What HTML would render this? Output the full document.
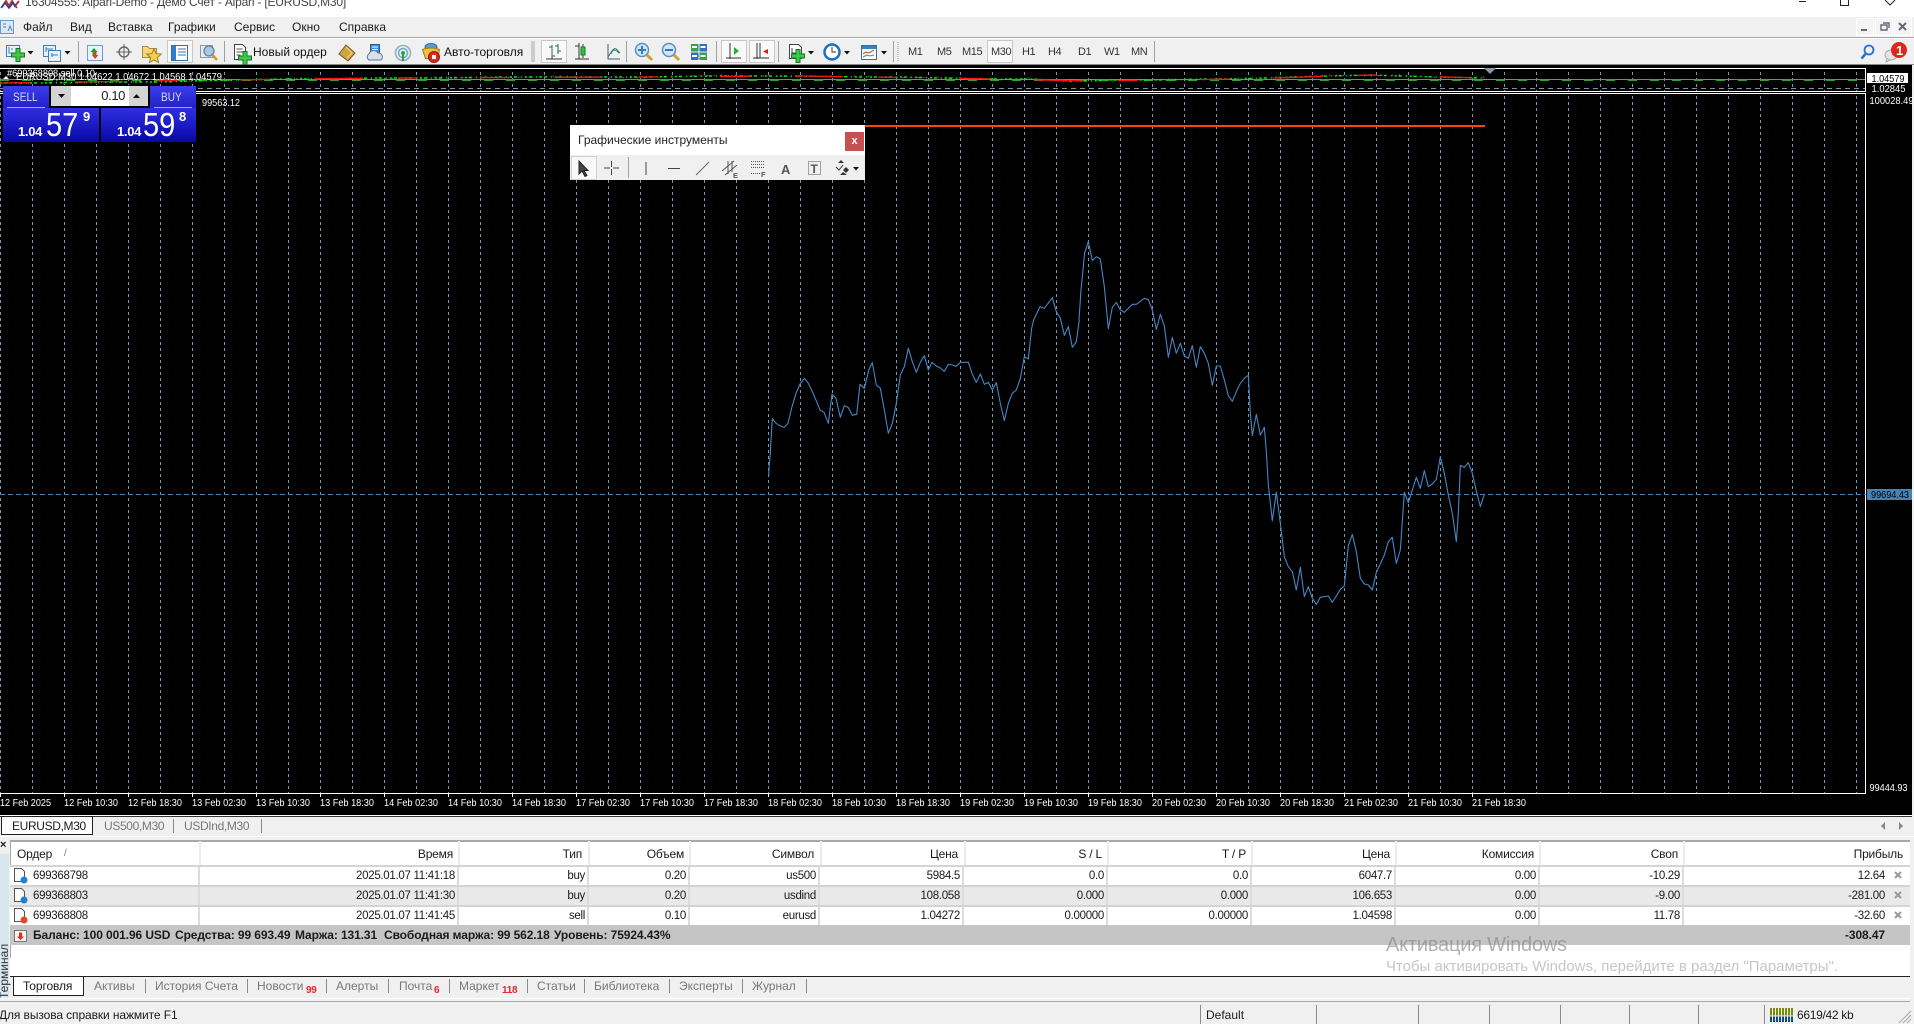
<!DOCTYPE html>
<html lang="ru"><head><meta charset="utf-8"><title>MT4</title>
<style>
html,body{margin:0;padding:0;background:#f0f0f0}
body{position:relative;width:1914px;height:1024px;overflow:hidden;font:12px "Liberation Sans","Noto Sans CJK SC",sans-serif;color:#1a1a1a}
.a{position:absolute}
.t{position:absolute;white-space:nowrap;line-height:14px;height:14px}
.g{color:#777}
.d{position:absolute;width:1px;background:#8a8a8a}
.row{position:absolute;left:10px;width:1904px;height:20px}
.row span{position:absolute;top:3px;line-height:14px;white-space:nowrap;font-size:11.5px;letter-spacing:-.3px}
.row span:nth-child(1){left:23px}
.row span:nth-child(2){right:1459px}.row span:nth-child(3){right:1329px}.row span:nth-child(4){right:1228px}
.row span:nth-child(5){right:1098px}.row span:nth-child(6){right:954px}.row span:nth-child(7){right:810px}
.row span:nth-child(8){right:666px}.row span:nth-child(9){right:522px}.row span:nth-child(10){right:378px}
.row span:nth-child(11){right:234px}.row span:nth-child(12){right:29px}
.row i{position:absolute;top:0;bottom:0;width:2px;background:#dcdcdc}
.hd{height:24px}
.hd span{top:6px;font-size:12px;letter-spacing:-.2px}
.hd span:nth-child(1){left:7px}
.hd span:nth-child(2){right:1461px}.hd span:nth-child(3){right:1332px}.hd span:nth-child(4){right:1230px}
.hd span:nth-child(5){right:1100px}.hd span:nth-child(6){right:956px}.hd span:nth-child(7){right:812px}
.hd span:nth-child(8){right:668px}.hd span:nth-child(9){right:524px}.hd span:nth-child(10){right:380px}
.hd span:nth-child(11){right:236px}.hd span:nth-child(12){right:11px}
.hd i{background:#ececec}
.sb{font-weight:bold;font-size:12px;letter-spacing:-.1px;top:928px}
.tf{font-size:11px;color:#333;top:45px;letter-spacing:-.4px}
.tab{top:979px;color:#777;font-size:12px}
.red{color:#ee2233;font-size:10px;font-weight:bold;top:984px;letter-spacing:-.3px}
.btn{position:absolute;background:linear-gradient(#2f2fe2,#0808a6);color:#fff}
.big{color:#fff;font-size:33px;line-height:14px;transform:scaleX(.88);transform-origin:0 50%}
.sq{transform:scaleX(.84);transform-origin:0 50%;color:#d5d8ff}
svg text{font-family:"Liberation Sans",sans-serif}
</style></head><body>

<!-- title bar -->
<div class="a" style="left:0;top:0;width:1914px;height:17px;background:#fff"></div>
<svg class="a" style="left:0;top:0" width="24" height="10"><path d="M2 7L6 1L9 6L12 1L15 6L19 1" fill="none" stroke="#c03030" stroke-width="2"/><path d="M1 8L5 3L9 8L13 3L17 8" fill="none" stroke="#2a3f90" stroke-width="1.5"/></svg>
<div class="t" style="left:25px;top:-5px;color:#444;font-size:12px;letter-spacing:-.2px">16304555: Alpari-Demo - Демо Счет - Alpari - [EURUSD,M30]</div>
<svg class="a" style="left:1790px;top:0" width="124" height="8" fill="none" stroke="#222"><path d="M9 1.500H16"/><path d="M50.500 -1V5.500H58.500V-1"/><path d="M95 0L100 5L105 0"/></svg>

<!-- menu bar -->
<svg class="a" style="left:0;top:19px" width="16" height="16"><rect x=".5" y="1.5" width="13" height="13" fill="#dce9f5" stroke="#6a9ac8"/><path d="M3 5h3M3 8h3M8 12l2-5 2 5" stroke="#4a80b8" fill="none"/></svg>
<div class="t" style="left:23px;top:20px">Файл</div>
<div class="t" style="left:70px;top:20px">Вид</div>
<div class="t" style="left:108px;top:20px">Вставка</div>
<div class="t" style="left:168px;top:20px">Графики</div>
<div class="t" style="left:234px;top:20px">Сервис</div>
<div class="t" style="left:292px;top:20px">Окно</div>
<div class="t" style="left:339px;top:20px">Справка</div>
<div class="a" style="left:0;top:37px;width:1914px;height:1px;background:#a8a8a8"></div>
<div class="a" style="left:0;top:38px;width:1914px;height:1px;background:#fff"></div>
<svg class="a" style="left:1856px;top:18px" width="58" height="19">
<g fill="#f4f4f4" stroke="#fff"><rect x=".5" y=".5" width="17" height="17"/><rect x="19.5" y=".5" width="17" height="17"/><rect x="38.5" y=".5" width="17" height="17"/></g>
<path d="M5 12h6" stroke="#667" stroke-width="2"/><path d="M25 7h6v5h-6zM27 5h6v5" fill="none" stroke="#667" stroke-width="1.4"/><path d="M43 5l7 7M50 5l-7 7" stroke="#667" stroke-width="2"/></svg>

<!-- chart -->
<svg class="a" style="left:0;top:0" width="1914" height="822">
<defs>
<pattern id="vg" width="32" height="6" patternUnits="userSpaceOnUse"><rect x="0" y="0" width="1" height="3" fill="#7f96b0"/></pattern>
<pattern id="tk" width="64" height="10" patternUnits="userSpaceOnUse"><rect x="0" y="0" width="1" height="10" fill="#fff"/></pattern>
</defs>
<rect x="0" y="64" width="1914" height="1" fill="#8a8a8a"/>
<rect x="0" y="65" width="1912" height="750" fill="#000"/>
<rect x="0" y="815" width="1912" height="1" fill="#fff"/>
<rect x="0" y="68" width="1865" height="23" fill="url(#vg)" />
<rect x="0" y="94" width="1865" height="699" fill="url(#vg)" />
<rect x="0" y="794" width="1500" height="3" fill="url(#tk)"/>
<g shape-rendering="crispEdges">
<path d="M0 68.500H1865.500V91.500H0M0 93.500H1865.500V793.500H0" fill="none" stroke="#fff"/>
<path d="M0 88.500H1865" stroke="#7f93a8" stroke-dasharray="5 4"/>
<path d="M0 79.500H1865" stroke="#778899"/>
<path d="M0 80H1865" stroke="#2f9f2f" stroke-width="1.500" stroke-dasharray="9 13"/>
<path d="M0 494.500H1866" stroke="#4682b4" stroke-dasharray="5 3"/>
<rect x="865" y="125" width="620" height="2" fill="#ff4500"/>
</g>
<path id="s" d="M0 83L40 83L100 82L160 82L224 80L300 79L380 78L440 78L500 77L560 77L640 77L720 76L800 76L860 77L900 77L940 78L1000 79L1030 79L1070 81L1090 81L1110 80L1170 80L1200 79L1240 79L1290 77L1330 76L1370 75L1400 76L1440 77L1485 78" fill="none" stroke="#00ee00" stroke-width="1.500" stroke-dasharray="2 2 3 4 1 3"/>
<path d="M0 82L40 83L100 83L160 81L224 81L300 78L380 79L440 77L500 78L560 76L640 78L720 75L800 77L860 76L900 78L940 77L1000 80L1030 78L1070 82L1090 80L1110 81L1170 79L1200 80L1240 78L1290 78L1330 75L1370 76L1400 75L1440 78L1485 77" fill="none" stroke="#00ee00" stroke-width="1" stroke-dasharray="1 6"/>
<path d="M0 83L224 80L380 78L640 77L800 76L940 78L1090 81L1240 79L1370 75L1485 78" fill="none" stroke="#ff1010" stroke-width="1.300" stroke-dasharray="30 45 48 35 20 62"/>
<path d="M1484 68h12l-6 6z" fill="#8a97a8"/>
<g fill="none" stroke="#4686c4" stroke-width="1.100" stroke-linejoin="round">
<path d="M768.700 476L769 468" />
<polyline transform="translate(760 230) scale(.33333)" vector-effect="non-scaling-stroke" points="27,714 31,670 33,630 37,566 48,580 60,587 72,592 84,580 96,530 108,490 120,462 133,445 145,460 157,485 170,515 180,540 192,547 205,580 216,492 228,505 241,562 253,527 265,533 277,556 290,553 300,463 313,475 327,418 337,398 349,465 361,475 373,540 385,610 397,580 409,520 421,435 433,410 445,355 457,395 469,427 481,397 493,377 505,420 516,397 529,408 541,414 553,424 565,403 577,405 589,409 601,397 625,397 637,433 649,457 661,432 673,463 685,457 697,480 709,458 721,520 733,572 745,520 757,490 769,480 781,445 793,380 805,387 815,295 821,270 840,230 853,235 877,203 889,245 901,265 913,316 925,290 937,352 949,335 958,268"/>
<polyline transform="translate(1070 230) scale(.33333)" vector-effect="non-scaling-stroke" points="27,268 33,180 38,130 44,68 55,35 67,92 79,80 91,87 103,170 115,296 127,232 139,217 151,240 163,247 187,223 199,223 223,205 235,209 247,240 259,298 271,253 283,288 295,382 307,322 319,370 331,340 343,378 355,385 367,347 379,412 391,350 403,370 415,400 427,466 439,408 451,408 463,450 475,497 487,514 499,485 511,460 523,445 535,436"/>
<polyline transform="translate(1220 360) scale(.33333)" vector-effect="non-scaling-stroke" points="85,45 91,160 97,227 109,163 121,225 133,202 139,275 145,375 157,482 169,397 181,490 193,590 205,620 217,635 229,690 241,622 253,710 265,680 277,715 289,733 301,712 325,708 337,727 349,708 361,688 373,678 385,557 397,523 409,575 421,655 433,672 445,675 457,690 469,637 481,612 493,585 505,545 517,532 529,610 541,570 553,397 565,428 577,390 589,352 601,385 613,332 625,380 637,372 649,358 661,290 673,340 685,405 697,460 709,545 715,460 721,316 733,322 745,308 757,340 769,393 781,440 793,403"/>
</g>
<path d="M3 79l3-3 3 3z" fill="#fff"/>
<g fill="#fff" font-size="10.5">
<text x="7" y="76.500" textLength="88" lengthAdjust="spacingAndGlyphs">#699368808 sell 0.10</text>
<text x="16" y="80" textLength="206" lengthAdjust="spacingAndGlyphs">EURUSD,M30  1.04622 1.04672 1.04568 1.04579</text>
<text x="202" y="106" textLength="38" lengthAdjust="spacingAndGlyphs">99563.12</text>
<text x="1871.500" y="92" textLength="34" lengthAdjust="spacingAndGlyphs">1.02845</text>
<text x="1869.500" y="104" textLength="44" lengthAdjust="spacingAndGlyphs">100028.49</text>
<text x="1869.500" y="791" textLength="38" lengthAdjust="spacingAndGlyphs">99444.93</text>
<g id="dl" font-size="10.5">
<text x="0" y="806" textLength="51" lengthAdjust="spacingAndGlyphs">12 Feb 2025</text>
<text x="64" y="806" textLength="54" lengthAdjust="spacingAndGlyphs">12 Feb 10:30</text>
<text x="128" y="806" textLength="54" lengthAdjust="spacingAndGlyphs">12 Feb 18:30</text>
<text x="192" y="806" textLength="54" lengthAdjust="spacingAndGlyphs">13 Feb 02:30</text>
<text x="256" y="806" textLength="54" lengthAdjust="spacingAndGlyphs">13 Feb 10:30</text>
<text x="320" y="806" textLength="54" lengthAdjust="spacingAndGlyphs">13 Feb 18:30</text>
<text x="384" y="806" textLength="54" lengthAdjust="spacingAndGlyphs">14 Feb 02:30</text>
<text x="448" y="806" textLength="54" lengthAdjust="spacingAndGlyphs">14 Feb 10:30</text>
<text x="512" y="806" textLength="54" lengthAdjust="spacingAndGlyphs">14 Feb 18:30</text>
<text x="576" y="806" textLength="54" lengthAdjust="spacingAndGlyphs">17 Feb 02:30</text>
<text x="640" y="806" textLength="54" lengthAdjust="spacingAndGlyphs">17 Feb 10:30</text>
<text x="704" y="806" textLength="54" lengthAdjust="spacingAndGlyphs">17 Feb 18:30</text>
<text x="768" y="806" textLength="54" lengthAdjust="spacingAndGlyphs">18 Feb 02:30</text>
<text x="832" y="806" textLength="54" lengthAdjust="spacingAndGlyphs">18 Feb 10:30</text>
<text x="896" y="806" textLength="54" lengthAdjust="spacingAndGlyphs">18 Feb 18:30</text>
<text x="960" y="806" textLength="54" lengthAdjust="spacingAndGlyphs">19 Feb 02:30</text>
<text x="1024" y="806" textLength="54" lengthAdjust="spacingAndGlyphs">19 Feb 10:30</text>
<text x="1088" y="806" textLength="54" lengthAdjust="spacingAndGlyphs">19 Feb 18:30</text>
<text x="1152" y="806" textLength="54" lengthAdjust="spacingAndGlyphs">20 Feb 02:30</text>
<text x="1216" y="806" textLength="54" lengthAdjust="spacingAndGlyphs">20 Feb 10:30</text>
<text x="1280" y="806" textLength="54" lengthAdjust="spacingAndGlyphs">20 Feb 18:30</text>
<text x="1344" y="806" textLength="54" lengthAdjust="spacingAndGlyphs">21 Feb 02:30</text>
<text x="1408" y="806" textLength="54" lengthAdjust="spacingAndGlyphs">21 Feb 10:30</text>
<text x="1472" y="806" textLength="54" lengthAdjust="spacingAndGlyphs">21 Feb 18:30</text>
</g></g>
<rect x="1867" y="73" width="41" height="10" fill="#fff"/>
<text x="1871.500" y="82" font-size="10.5" fill="#000" textLength="33" lengthAdjust="spacingAndGlyphs">1.04579</text>
<rect x="1867" y="489" width="45" height="11" fill="#4682b4"/>
<text x="1871" y="498" font-size="10.5" fill="#000" textLength="38" lengthAdjust="spacingAndGlyphs">99694.43</text>
</svg>

<!-- one click trading -->
<div class="a" style="left:49px;top:85px;width:101px;height:22px;background:#000"></div>
<div class="btn" style="left:3px;top:86px;width:46px;height:22px;background:linear-gradient(#3c3cea,#2222c8)"></div>
<div class="btn" style="left:150px;top:86px;width:46px;height:22px;background:linear-gradient(#3c3cea,#2222c8)"></div>
<div class="a" style="left:7px;top:107px;width:38px;height:1px;background:#aab"></div>
<div class="a" style="left:154px;top:107px;width:38px;height:1px;background:#aab"></div>
<div class="t sq" style="left:13px;top:90px">SELL</div>
<div class="t sq" style="left:161px;top:90px">BUY</div>
<div class="a" style="left:51px;top:86px;width:20px;height:20px;background:#d4d4d4"></div>
<div class="a" style="left:71px;top:86px;width:58px;height:20px;background:#fff"></div>
<div class="a" style="left:129px;top:86px;width:19px;height:20px;background:#d4d4d4"></div>
<svg class="a" style="left:51px;top:86px" width="97" height="20"><path d="M7 8h7l-3.500 4zM82 12h7l-3.500-4z" fill="#111"/></svg>
<div class="t" style="right:1789px;top:89px;font-size:13px;color:#222;letter-spacing:-.4px">0.10</div>
<div class="btn" style="left:3px;top:108px;width:96px;height:34px"></div>
<div class="btn" style="left:101px;top:108px;width:95px;height:34px"></div>
<div class="t" style="left:18px;top:125px;color:#fff;font-weight:bold;font-size:13px;letter-spacing:-.3px">1.04</div>
<div class="t" style="left:117px;top:125px;color:#fff;font-weight:bold;font-size:13px;letter-spacing:-.3px">1.04</div>
<div class="t big" style="left:46px;top:118px">57</div>
<div class="t big" style="left:143px;top:118px">59</div>
<div class="t" style="left:83px;top:110px;color:#fff;font-size:13px;font-weight:bold">9</div>
<div class="t" style="left:179px;top:110px;color:#fff;font-size:13px;font-weight:bold">8</div>

<!-- graphic tools panel -->
<div class="a" style="left:570px;top:125px;width:295px;height:30px;background:#fff"></div>
<div class="a" style="left:570px;top:155px;width:295px;height:25px;background:#f0f0f0"></div>
<div class="t" style="left:578px;top:133px;color:#222">Графические инструменты</div>
<div class="a" style="left:845px;top:132px;width:19px;height:19px;background:#c75050;color:#fff;font-weight:bold;font-size:11px;line-height:18px;text-align:center">x</div>

<!-- tabs above terminal -->
<div class="a" style="left:0;top:816px;width:1912px;height:1px;background:#333"></div>
<div class="a" style="left:1px;top:816px;width:92px;height:19px;background:#fff;border:1px solid #222;box-sizing:border-box"></div>
<div class="t" style="left:12px;top:819px;letter-spacing:-.35px">EURUSD,M30</div>
<div class="t g" style="left:104px;top:819px;letter-spacing:-.35px">US500,M30</div>
<div class="d" style="left:173px;top:819px;height:14px"></div>
<div class="t g" style="left:184px;top:819px;letter-spacing:-.35px">USDInd,M30</div>
<div class="d" style="left:261px;top:819px;height:14px"></div>
<svg class="a" style="left:1878px;top:821px" width="30" height="10"><path d="M7 1L3 5l4 4zM21 1l4 4-4 4z" fill="#888"/></svg>

<!-- terminal -->
<div class="a" style="left:0;top:836px;width:1914px;height:1px;background:#fff"></div>
<div class="a" style="left:0;top:854px;width:9px;height:145px;background:#d8e6f0"></div>
<div class="t" style="left:0;top:839px;font-weight:bold;font-size:11px;line-height:12px">×</div>
<div class="t" style="left:-21px;top:967px;transform:rotate(-90deg);width:50px;text-align:left;color:#333;font-size:12px;line-height:14px">Терминал</div>
<div class="a" style="left:10px;top:841px;width:1904px;height:135px;background:#fff"></div>
<div class="a" style="left:10px;top:840px;width:1904px;height:2px;background:#a8a8a8"></div>
<div class="a" style="left:10px;top:840px;width:1px;height:118px;background:#a8a8a8"></div>

<div class="row hd" style="top:841px">
<span>Ордер</span><span>Время</span><span>Тип</span><span>Объем</span><span>Символ</span><span>Цена</span><span>S / L</span><span>T / P</span><span>Цена</span><span>Комиссия</span><span>Своп</span><span>Прибыль</span>
<i style="left:189px"></i><i style="left:448px"></i><i style="left:578px"></i><i style="left:679px"></i><i style="left:810px"></i><i style="left:954px"></i><i style="left:1097px"></i><i style="left:1241px"></i><i style="left:1385px"></i><i style="left:1529px"></i><i style="left:1673px"></i>
</div>
<div class="t g" style="left:64px;top:847px;font-size:10px">/</div>

<div class="row" style="top:866px;background:#fff">
<span>699368798</span><span>2025.01.07 11:41:18</span><span>buy</span><span>0.20</span><span>us500</span><span>5984.5</span><span>0.0</span><span>0.0</span><span>6047.7</span><span>0.00</span><span>-10.29</span><span>12.64</span>
<i style="left:188px"></i><i style="left:447px"></i><i style="left:577px"></i><i style="left:678px"></i><i style="left:808px"></i><i style="left:952px"></i><i style="left:1096px"></i><i style="left:1240px"></i><i style="left:1384px"></i><i style="left:1528px"></i><i style="left:1672px"></i>
</div>
<div class="row" style="top:886px;background:#e9e9e9">
<span>699368803</span><span>2025.01.07 11:41:30</span><span>buy</span><span>0.20</span><span>usdind</span><span>108.058</span><span>0.000</span><span>0.000</span><span>106.653</span><span>0.00</span><span>-9.00</span><span>-281.00</span>
<i style="left:188px"></i><i style="left:447px"></i><i style="left:577px"></i><i style="left:678px"></i><i style="left:808px"></i><i style="left:952px"></i><i style="left:1096px"></i><i style="left:1240px"></i><i style="left:1384px"></i><i style="left:1528px"></i><i style="left:1672px"></i>
</div>
<div class="row" style="top:906px;background:#fff">
<span>699368808</span><span>2025.01.07 11:41:45</span><span>sell</span><span>0.10</span><span>eurusd</span><span>1.04272</span><span>0.00000</span><span>0.00000</span><span>1.04598</span><span>0.00</span><span>11.78</span><span>-32.60</span>
<i style="left:188px"></i><i style="left:447px"></i><i style="left:577px"></i><i style="left:678px"></i><i style="left:808px"></i><i style="left:952px"></i><i style="left:1096px"></i><i style="left:1240px"></i><i style="left:1384px"></i><i style="left:1528px"></i><i style="left:1672px"></i>
</div>
<div class="a" style="left:10px;top:865px;width:1904px;height:2px;background:#d4d4d4"></div>
<div class="a" style="left:10px;top:885px;width:1904px;height:2px;background:#d4d4d4"></div>
<div class="a" style="left:10px;top:905px;width:1904px;height:2px;background:#d4d4d4"></div>
<div class="a" style="left:10px;top:925px;width:1904px;height:20px;background:#c5c5c5"></div>
<div class="t sb" style="left:33px">Баланс: 100 001.96 USD</div>
<div class="t sb" style="left:175px">Средства: 99 693.49</div>
<div class="t sb" style="left:295px">Маржа: 131.31</div>
<div class="t sb" style="left:384px">Свободная маржа: 99 562.18</div>
<div class="t sb" style="left:554px">Уровень: 75924.43%</div>
<div class="t sb" style="right:29px">-308.47</div>
<svg class="a" style="left:12px;top:866px" width="18" height="78">
<g fill="#fff" stroke="#555"><path d="M2.500 2.500h7l3 3v10h-10z"/><path d="M2.500 22.500h7l3 3v10h-10z"/><path d="M2.500 42.500h7l3 3v10h-10z"/></g>
<circle cx="12" cy="14" r="3.500" fill="#2080d8"/><circle cx="12" cy="34" r="3.500" fill="#2080d8"/><circle cx="12" cy="54" r="3.500" fill="#e04a20"/>
<rect x="2.500" y="64.500" width="12" height="11" fill="#f4f4f4" stroke="#777"/><path d="M7 66.500h3v4h2l-3.500 3.500-3.500-3.500h2z" fill="#d8301c"/>
</svg>
<svg class="a" style="left:1893px;top:870px" width="12" height="50" stroke="#999" stroke-width="2"><path d="M2 2l6 6M8 2l-6 6M2 22l6 6M8 22l-6 6M2 42l6 6M8 42l-6 6"/></svg>

<div class="t" style="left:1386px;top:934px;height:22px;line-height:22px;font-size:20px;color:rgba(130,130,130,.62);letter-spacing:-.2px">Активация Windows</div>
<div class="t" style="left:1386px;top:959px;height:16px;line-height:16px;font-size:15px;color:#c6c6c6;letter-spacing:-.02px">Чтобы активировать Windows, перейдите в раздел "Параметры".</div>

<!-- terminal tabs -->
<div class="a" style="left:10px;top:976px;width:1904px;height:1px;background:#222"></div>
<div class="a" style="left:13px;top:976px;width:71px;height:20px;background:#fff;border:1px solid #222;box-sizing:border-box"></div>
<div class="t" style="left:23px;top:979px;letter-spacing:-.1px">Торговля</div>
<div class="t tab" style="left:94px">Активы</div><div class="d" style="left:145px;top:979px;height:14px"></div>
<div class="t tab" style="left:155px">История Счета</div><div class="d" style="left:247px;top:979px;height:14px"></div>
<div class="t tab" style="left:257px">Новости</div><div class="t red" style="left:306px">99</div><div class="d" style="left:326px;top:979px;height:14px"></div>
<div class="t tab" style="left:336px">Алерты</div><div class="d" style="left:388px;top:979px;height:14px"></div>
<div class="t tab" style="left:399px">Почта</div><div class="t red" style="left:434px">6</div><div class="d" style="left:449px;top:979px;height:14px"></div>
<div class="t tab" style="left:459px">Маркет</div><div class="t red" style="left:502px">118</div><div class="d" style="left:527px;top:979px;height:14px"></div>
<div class="t tab" style="left:537px">Статьи</div><div class="d" style="left:584px;top:979px;height:14px"></div>
<div class="t tab" style="left:594px">Библиотека</div><div class="d" style="left:669px;top:979px;height:14px"></div>
<div class="t tab" style="left:679px">Эксперты</div><div class="d" style="left:742px;top:979px;height:14px"></div>
<div class="t tab" style="left:752px">Журнал</div><div class="d" style="left:806px;top:979px;height:14px"></div>

<!-- status bar -->
<div class="a" style="left:0;top:998px;width:1914px;height:1px;background:#fff"></div>
<div class="a" style="left:0;top:1001px;width:1914px;height:1px;background:#a8a8a8"></div>
<div class="t" style="left:-1px;top:1008px;letter-spacing:-.1px">Для вызова справки нажмите F1</div>
<div class="d" style="left:1200px;top:1005px;height:19px"></div>
<div class="t" style="left:1206px;top:1008px">Default</div>
<div class="d" style="left:1316px;top:1005px;height:19px"></div><div class="d" style="left:1418px;top:1005px;height:19px"></div><div class="d" style="left:1489px;top:1005px;height:19px"></div><div class="d" style="left:1560px;top:1005px;height:19px"></div><div class="d" style="left:1629px;top:1005px;height:19px"></div><div class="d" style="left:1698px;top:1005px;height:19px"></div><div class="d" style="left:1764px;top:1005px;height:19px"></div>
<svg class="a" style="left:1770px;top:1008px" width="24" height="14" shape-rendering="crispEdges">
<path d="M1 0v8M4 0v8M7 0v8M10 0v8M13 0v8M16 0v8M19 0v8M22 0v8" stroke="#7a8a10" stroke-width="2"/>
<path d="M1 8v6M4 8v6M7 8v6M10 8v6M13 8v6M16 8v6M19 8v6M22 8v6" stroke="#104a80" stroke-width="2"/>
<path d="M0 8h24" stroke="#f0f0f0"/></svg>
<div class="t" style="left:1797px;top:1008px;letter-spacing:-.3px">6619/42 kb</div>
<svg class="a" style="left:1898px;top:1010px" width="14" height="14" stroke="#aaa"><path d="M13 1L1 13M13 5L5 13M13 9L9 13"/></svg>
<div class="a" style="left:1910px;top:840px;width:4px;height:162px;background:#f0f0f0"></div>

<!-- toolbar and tool icons -->
<svg class="a" style="left:0;top:0" width="1914" height="190">
<defs>
<g id="pl"><path d="M-2-6.500h4v4.500h4.500v4h-4.500v4.500h-4v-4.500h-4.500v-4h4.500z" fill="#3fc944" stroke="#14782a"/></g>
<path id="ar" d="M-3 0h6l-3 3.500z" fill="#111"/>
<g id="ax"><path d="M0-9V7M-4 7h14" stroke="#333" stroke-width="1" fill="none"/><path d="M-4-6h4" stroke="#333"/></g>
<g id="mag"><circle r="6.500" fill="#cfe4f7" stroke="#5b8fc4" stroke-width="1.500"/><path d="M5 5l5 5" stroke="#caa628" stroke-width="3"/></g>
</defs>
<!-- new chart -->
<rect x="6.500" y="45.500" width="13" height="11" fill="#e8f1fa" stroke="#3e7fb5"/><path d="M9 47v6h6M12 48v2" stroke="#3e7fb5" fill="none"/><use href="#pl" x="18" y="55"/><use href="#ar" x="30.500" y="51"/>
<!-- profiles -->
<rect x="43.500" y="45.500" width="12" height="11" fill="#e8f1fa" stroke="#3e7fb5"/><rect x="48.500" y="50.500" width="12" height="11" fill="#e8f1fa" stroke="#3e7fb5"/><path d="M46 49h7M51 55h7M46 47v5M52 53v4" stroke="#4a7aa8"/><use href="#ar" x="67.500" y="51"/>
<rect x="78" y="41" width="1" height="21" fill="#a0a0a0"/>
<!-- market watch -->
<rect x="87.500" y="45.500" width="15" height="15" fill="#eaf3fb" stroke="#6ea0d0"/><path d="M94 48l-3.500 4h2v3h3v-3h2z" fill="#1e9a3a"/><path d="M95 59l3.500-4h-2v-3h-2.500v3h-2z" fill="#d84020"/>
<!-- crosshair -->
<circle cx="124" cy="52" r="5" fill="none" stroke="#666" stroke-width="1.400"/><path d="M124 44v16M116 52h16" stroke="#666"/>
<!-- folder star -->
<path d="M142.500 46.500h5l2 2h7v9h-14z" fill="#f7d67a" stroke="#a58a40"/><path d="M154 49l2.200 4.500 5 .6-3.700 3.400 1 5-4.500-2.500-4.500 2.500 1-5-3.700-3.400 5-.6z" fill="#f4d040" stroke="#9a8030"/>
<!-- terminal selected -->
<rect x="167.500" y="40.500" width="25" height="22" fill="#f9f9f9" stroke="#c8c8c8"/><rect x="171.500" y="45.500" width="16" height="15" fill="#fff" stroke="#2f6fb0"/><rect x="172" y="46" width="4" height="14" fill="#2f7fd0"/><path d="M178 49h8M178 52h8M178 55h8" stroke="#3a70a8"/>
<!-- tester -->
<rect x="200.500" y="45.500" width="12" height="12" fill="#e4ebf2" stroke="#8a9ab0"/><circle cx="209" cy="51" r="5" fill="#a9c8e8" stroke="#6b7f90" stroke-width="1.300"/><path d="M212.500 55l4.500 5" stroke="#c9a028" stroke-width="2.500"/>
<rect x="224" y="41" width="1" height="21" fill="#a0a0a0"/>
<!-- new order -->
<path d="M234.500 44.500h8l3 3v12h-11z" fill="#fff" stroke="#444"/><path d="M236.500 49h6M236.500 52h6M236.500 55h4" stroke="#555"/><use href="#pl" x="245" y="58"/>
<!-- book -->
<path d="M346 45l9 8-7 8-9-7z" fill="#cfa340" stroke="#7a5a20"/><path d="M346 47l6 6-5 5" fill="none" stroke="#f0d890"/>
<!-- signals cloud -->
<path d="M370.500 44.500h9v9h-9z" fill="#3c8edc" stroke="#1f5fa0"/><path d="M372 47h6M372 49.500h6" stroke="#fff"/><path d="M369 60a3.500 3.500 0 0 1 0-6a5 5 0 0 1 9-1a4 4 0 0 1 3 7z" fill="#d5e1ec" stroke="#5a7a9a"/>
<!-- vps -->
<circle cx="403" cy="53" r="7.500" fill="none" stroke="#9ab8c8" stroke-width="1.800"/><circle cx="403" cy="53" r="4.500" fill="none" stroke="#6fa8c8" stroke-width="1.500"/><circle cx="403" cy="53" r="2" fill="#2aa04a"/><path d="M403 53v8" stroke="#2aa04a" stroke-width="2"/>
<!-- auto trading -->
<ellipse cx="431" cy="47" rx="6" ry="3.500" fill="#5b9ad8" stroke="#3a6a9a"/><path d="M422.500 49.500c5-2 12-2 17 0l-2 9h-12z" fill="#f0c040" stroke="#9a7a20"/><circle cx="434" cy="57" r="5.500" fill="#e02818" stroke="#901810"/><rect x="432" y="55" width="4" height="4" fill="#fff"/>
<path d="M532 41v21M534 41v21" stroke="#a8a8a8"/>
<!-- chart type -->
<rect x="541.500" y="40.500" width="25" height="22" fill="#f9f9f9" stroke="#c8c8c8"/>
<g stroke="#1f6f3a" fill="none"><path d="M552 45v14M552 47h-3M552 56h3M558 44v10M558 46h-3M558 51h3"/></g><path d="M546 59h16" stroke="#333"/>
<path d="M583 44v3M583 55v3" stroke="#333"/><rect x="581" y="47" width="4" height="8" fill="#2fc23a" stroke="#14782a"/><use href="#ax" x="579" y="52"/>
<path d="M608 44v15h12M608 57l4-6c2-3 4-3 6 0l2 2" stroke="#37606f" fill="none"/><path d="M611 54c2-5 4-5 8-1" stroke="#2aa04a" fill="none"/>
<rect x="626" y="41" width="1" height="21" fill="#a0a0a0"/>
<use href="#mag" x="642" y="50"/><path d="M638 50h8M642 46v8" stroke="#3a78b8" stroke-width="2"/>
<use href="#mag" x="669" y="50"/><path d="M665 50h8" stroke="#3a78b8" stroke-width="2"/>
<rect x="691" y="44" width="7.500" height="7.500" fill="#36a04a"/><rect x="699.500" y="44" width="7.500" height="7.500" fill="#2f6fc8"/><rect x="691" y="52.500" width="7.500" height="7.500" fill="#2f6fc8"/><rect x="699.500" y="52.500" width="7.500" height="7.500" fill="#36a04a"/><path d="M692 47h5M700.500 47h5M692 56h5M700.500 56h5" stroke="#fff" stroke-width="2"/>
<rect x="716" y="41" width="1" height="21" fill="#a0a0a0"/>
<rect x="721.500" y="40.500" width="25" height="22" fill="#f9f9f9" stroke="#c8c8c8"/><path d="M730 43v16M726 58h15" stroke="#333" fill="none"/><path d="M734 47l5 4-5 4z" fill="#22b03a"/>
<rect x="749.500" y="40.500" width="25" height="22" fill="#f9f9f9" stroke="#c8c8c8"/><path d="M757 43v16M753 58h16M760 43v15" stroke="#333" fill="none"/><path d="M768 49l-5 2.500 5 2.500z" fill="#d82020"/>
<rect x="778" y="41" width="1" height="21" fill="#a0a0a0"/>
<path d="M789.500 44.500h9l3 3v11h-12z" fill="#fff" stroke="#444"/><path d="M792 48v5h4" fill="none" stroke="#444"/><use href="#pl" x="798" y="56"/><use href="#ar" x="811" y="51"/>
<circle cx="832" cy="52" r="7.500" fill="#fff" stroke="#1f6fc0" stroke-width="2.500"/><path d="M832 47v5h4" fill="none" stroke="#333"/><use href="#ar" x="847" y="51"/>
<rect x="861.500" y="45.500" width="15" height="14" fill="#fff" stroke="#3a6a9a"/><rect x="862" y="46" width="14" height="3" fill="#3a80c0"/><path d="M863 54l3-2 3 1 5-3" stroke="#c03030" fill="none"/><path d="M863 57l4-2 3 1 4-1" stroke="#2aa04a" fill="none"/><use href="#ar" x="884" y="51"/>
<rect x="893" y="41" width="1" height="21" fill="#a0a0a0"/><path d="M898 42v20" stroke="#999" stroke-dasharray="1 1"/>
<rect x="987.500" y="40.500" width="25" height="22" fill="#f9f9f9" stroke="#c8c8c8"/>
<rect x="1154" y="41" width="1" height="21" fill="#a0a0a0"/>
<!-- search / notification -->
<circle cx="1869" cy="50" r="4.500" fill="none" stroke="#2a70c8" stroke-width="1.800"/><path d="M1865.500 54l-4 4.500" stroke="#2a70c8" stroke-width="2.500"/>
<ellipse cx="1891" cy="55" rx="6" ry="5" fill="#e4e4e4" stroke="#aaa"/><path d="M1887 59l-1 3 4-2" fill="#e4e4e4" stroke="#aaa"/>
<circle cx="1899" cy="50" r="8" fill="#d82a1c"/>
<!-- tools panel icons -->
<rect x="571.500" y="156.500" width="25" height="23" fill="#f8f8f8" stroke="#d0d0d0"/>
<path d="M579 161v13l3-3 3 5.500 2-1-3-5h4z" fill="#444" stroke="#222"/>
<path d="M604 168h6M613 168h6M611.500 161v6M611.500 169v6" stroke="#444"/>
<rect x="628" y="157" width="1" height="21" fill="#a0a0a0"/>
<path d="M646 162v13" stroke="#444"/><path d="M668 168.500h12" stroke="#444"/><path d="M696 175l13-13" stroke="#666"/>
<path d="M722 171l12-10M725 175l12-10M728 161v13M732 161v11" stroke="#555" fill="none"/>
<path d="M751 161.500h13M751 164.500h13M751 167.500h13M751 173.500h9" stroke="#555" stroke-dasharray="1 1"/>
<path d="M808.500 161.500h12v13h-12z" fill="none" stroke="#555" stroke-dasharray="1 1"/>
<path d="M841 160l-3 3h6zM843 172l-3 3h7z" fill="#333"/><path d="M836 167l3 3 4-5" fill="none" stroke="#333"/><path d="M846 167l-3 3 3 3 3-3z" fill="#333"/>
<use href="#ar" x="856" y="167"/>
<g font-weight="bold" fill="#555"><text x="733" y="178" font-size="7.500">E</text><text x="761" y="177" font-size="7.500">F</text><text x="781" y="174" font-size="13">A</text><text x="810.500" y="173" font-size="12">T</text></g>
<text x="1896" y="55" fill="#fff" font-size="13" font-weight="bold">1</text>
</svg>

<!-- toolbar labels -->
<div class="t" style="left:253px;top:45px;color:#111">Новый ордер</div>
<div class="t" style="left:444px;top:45px;color:#111">Авто-торговля</div>
<div class="t tf" style="left:908px">M1</div><div class="t tf" style="left:937px">M5</div><div class="t tf" style="left:962px">M15</div><div class="t tf" style="left:991px">M30</div><div class="t tf" style="left:1022px">H1</div><div class="t tf" style="left:1048px">H4</div><div class="t tf" style="left:1078px">D1</div><div class="t tf" style="left:1104px">W1</div><div class="t tf" style="left:1131px">MN</div>

</body></html>
